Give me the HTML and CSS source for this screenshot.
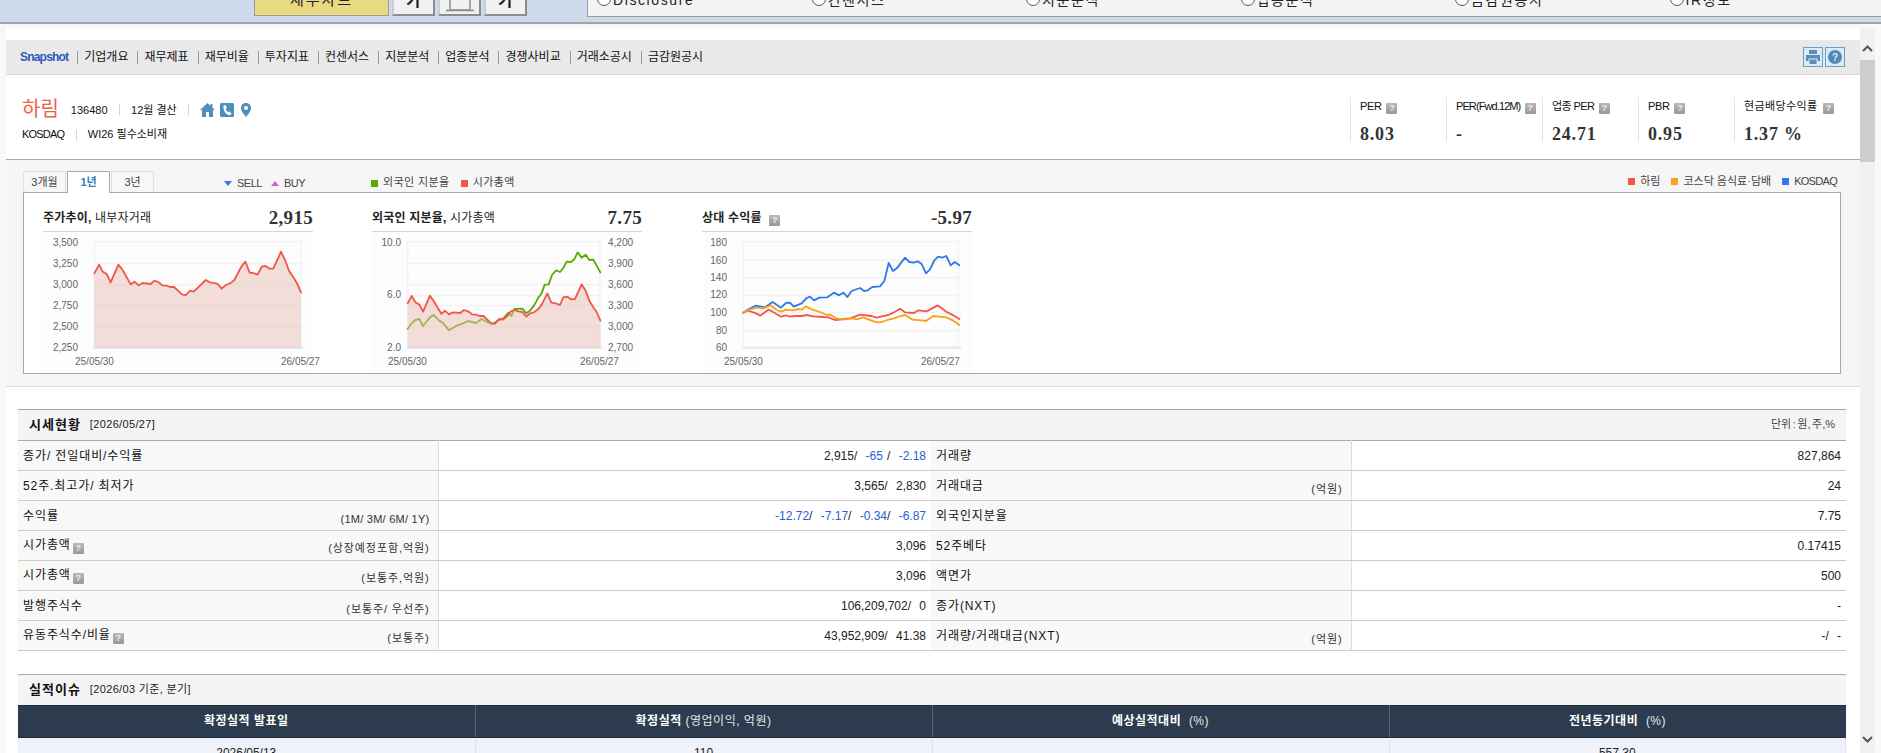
FILE: index.html
```html
<!DOCTYPE html>
<html lang="ko">
<head>
<meta charset="utf-8">
<title>Snapshot</title>
<link rel="stylesheet" href="styles.css">
</head>
<body>
<div class="topband">
  <div class="chartbtn">재무차트</div>
  <div class="fontbtn"><span>가</span></div>
  <div class="fontbtn"><svg width="28" height="26" viewBox="0 0 28 26"><path d="M4 6h20v16H4zM0 22.500h28" fill="none" stroke="#8a8a8a" stroke-width="1.500"/></svg></div>
  <div class="fontbtn"><span>가</span></div>
  <div class="radiopanel">
    <span class="radio">Disclosure</span>
    <span class="radio">컨센서스</span>
    <span class="radio">지분분석</span>
    <span class="radio">업종분석</span>
    <span class="radio">금감원공시</span>
    <span class="radio">IR정보</span>
  </div>
</div>
<div class="page">
  <main class="content">
    <nav class="nav">
      <a class="nav-item first">Snapshot</a>
      <a class="nav-item">기업개요</a>
      <a class="nav-item">재무제표</a>
      <a class="nav-item">재무비율</a>
      <a class="nav-item">투자지표</a>
      <a class="nav-item">컨센서스</a>
      <a class="nav-item">지분분석</a>
      <a class="nav-item">업종분석</a>
      <a class="nav-item">경쟁사비교</a>
      <a class="nav-item">거래소공시</a>
      <a class="nav-item">금감원공시</a>
      <div class="nav-tools">
        <span class="toolbtn"><svg width="14" height="14" viewBox="0 0 14 14"><path fill="#5b8fb9" d="M3 0h8v4H3zM0 5h14v6h-2.500V8.500h-9V11H0zM3.500 9.500h7V14h-7z"/></svg></span>
        <span class="toolbtn"><svg width="14" height="14" viewBox="0 0 14 14"><circle cx="7" cy="7" r="7" fill="#4f8ab5"/><text x="7" y="11" text-anchor="middle" class="helpq">?</text></svg></span>
      </div>
    </nav>

    <section class="company">
      <div class="co-left">
        <div class="co-row1">
          <h1 class="co-name">하림</h1>
          <span class="co-text">136480</span><i class="sep"></i>
          <span class="co-text">12월 결산</span><i class="sep"></i>
          <svg class="co-icons" width="52" height="14" viewBox="0 0 52 14">
            <path fill="#4f8fbd" d="M7.500 0 0 7h2v7h4V9h3v5h4V7h2L12.500 4.700V1h-2v1.800z"/>
            <rect x="20" width="14" height="14" rx="1.500" fill="#4f8fbd"/>
            <path fill="#fff" d="M23.500 2.500l2-.5 1.500 3-1.300 1c.5 1.500 1.300 2.600 2.600 3.300l1.200-1 2 2.400-1.500 1.600c-4.500-.5-7-5-6.500-9.800z"/>
            <path fill="#4f8fbd" fill-rule="evenodd" d="M46 0c3 0 5 2.200 5 5 0 3.500-5 9-5 9s-5-5.500-5-9c0-2.800 2-5 5-5zm0 3a2 2 0 1 0 0 4 2 2 0 0 0 0-4z"/>
          </svg>
        </div>
        <div class="co-row2">
          <span class="co-text co-tight">KOSDAQ</span><i class="sep"></i>
          <span class="co-text">WI26 필수소비재</span>
        </div>
      </div>
      <div class="metrics">
        <div class="metric"><div class="m-label">PER <b class="q">?</b></div><div class="m-val">8.03</div></div>
        <div class="metric"><div class="m-label m-tight">PER(Fwd.12M) <b class="q">?</b></div><div class="m-val">-</div></div>
        <div class="metric"><div class="m-label m-tight2">업종 PER <b class="q">?</b></div><div class="m-val">24.71</div></div>
        <div class="metric"><div class="m-label">PBR <b class="q">?</b></div><div class="m-val">0.95</div></div>
        <div class="metric"><div class="m-label m-wide">현금배당수익률 <b class="q">?</b></div><div class="m-val">1.37 %</div></div>
      </div>
    </section>

    <section class="charts">
      <div class="chart-head">
        <div class="tabs">
          <span class="tab">3개월</span>
          <span class="tab active">1년</span>
          <span class="tab">3년</span>
        </div>
        <div class="trades">
          <span class="lg"><i class="tri down"></i>SELL</span>
          <span class="lg"><i class="tri up"></i>BUY</span>
        </div>
        <div class="legend-a">
          <span class="lg"><i class="sq c-green"></i>외국인 지분율</span>
          <span class="lg"><i class="sq c-red"></i>시가총액</span>
        </div>
        <div class="legend-b">
          <span class="lg"><i class="sq c-red"></i>하림</span>
          <span class="lg"><i class="sq c-orange"></i>코스닥 음식료·담배</span>
          <span class="lg lg-tight"><i class="sq c-blue"></i>KOSDAQ</span>
        </div>
      </div>
      <div class="chart-box">
        <article class="card">
          <header class="card-head"><span class="card-title"><b>주가추이,</b> 내부자거래</span><strong class="card-val">2,915</strong></header>
          <svg class="plot" width="270" height="141" viewBox="0 0 270 141">
            <g transform="scale(.33333) translate(-129 -216)">
              <path class="grid" d="M280 245H908M280 311H908M280 374H908M280 437H908M280 500H908M283 245V563M902 245V563"/>
              <path class="base" d="M280 563H908"/>
              <polygon class="area" points="283,340 297,314 308,335 320,342 332,367 355,314 368,330 392,373 404,365 416,376 428,369 452,372 463,362 475,366 487,376 499,377 510,381 522,381 547,404 558,405 570,392 581,395 617,360 630,367 652,371 665,386 678,375 692,369 703,360 724,320 736,305 749,338 760,339 773,344 785,320 797,318 809,326 820,326 843,275 855,300 867,332 880,352 890,368 903,397 903,563 283,563"/>
              <polyline class="ln red" points="283,340 297,314 308,335 320,342 332,367 355,314 368,330 392,373 404,365 416,376 428,369 452,372 463,362 475,366 487,376 499,377 510,381 522,381 547,404 558,405 570,392 581,395 617,360 630,367 652,371 665,386 678,375 692,369 703,360 724,320 736,305 749,338 760,339 773,344 785,320 797,318 809,326 820,326 843,275 855,300 867,332 880,352 890,368 903,397"/>
            </g>
            <g class="ax ax-end">
              <text x="35" y="14">3,500</text><text x="35" y="35">3,250</text><text x="35" y="56">3,000</text><text x="35" y="77">2,750</text><text x="35" y="98">2,500</text><text x="35" y="119">2,250</text>
            </g>
            <g class="ax"><text x="32" y="133">25/05/30</text><text x="238" y="133">26/05/27</text></g>
          </svg>
        </article>
        <article class="card">
          <header class="card-head"><span class="card-title"><b>외국인 지분율,</b> 시가총액</span><strong class="card-val">7.75</strong></header>
          <svg class="plot" width="270" height="141" viewBox="0 0 270 141">
            <g transform="scale(.33333) translate(-96 -216)">
              <path class="grid" d="M200 245H786M200 311H786M200 374H786M200 407H786M200 437H786M200 500H786M203 245V563M780 245V563"/>
              <path class="base" d="M200 563H786"/>
              <polyline class="ln green" points="203,507 215,490 226,480 238,477 249,498 270,472 281,465 295,480 310,490 327,511 350,497 365,492 384,483 408,489 425,477 445,488 458,492 477,480 490,475 505,458 515,468 523,447 547,446 559,460 570,452 582,437 594,415 605,400 614,374 626,373 636,345 648,331 660,336 670,324 680,305 693,306 703,298 713,277 725,293 737,284 748,300 760,299 781,337"/>
              <polygon class="area" points="203,430 215,408 226,427 238,434 249,455 270,407 281,423 304,461 315,452 327,463 338,457 361,459 372,450 384,454 396,463 408,464 419,468 430,468 454,490 465,491 477,477 488,479 500,470 512,455 523,450 535,454 547,456 559,470 570,460 582,457 594,448 605,434 622,400 634,428 648,430 660,435 670,412 682,410 693,418 705,417 725,373 737,392 748,422 760,442 770,456 781,482 781,563 203,563"/>
              <polyline class="ln red" points="203,430 215,408 226,427 238,434 249,455 270,407 281,423 304,461 315,452 327,463 338,457 361,459 372,450 384,454 396,463 408,464 419,468 430,468 454,490 465,491 477,477 488,479 500,470 512,455 523,450 535,454 547,456 559,470 570,460 582,457 594,448 605,434 622,400 634,428 648,430 660,435 670,412 682,410 693,418 705,417 725,373 737,392 748,422 760,442 770,456 781,482"/>
            </g>
            <g class="ax ax-end"><text x="29" y="14">10.0</text><text x="29" y="66">6.0</text><text x="29" y="119">2.0</text></g>
            <g class="ax">
              <text x="236" y="14">4,200</text><text x="236" y="35">3,900</text><text x="236" y="56">3,600</text><text x="236" y="77">3,300</text><text x="236" y="98">3,000</text><text x="236" y="119">2,700</text>
              <text x="16" y="133">25/05/30</text><text x="208" y="133">26/05/27</text>
            </g>
          </svg>
        </article>
        <article class="card card-last">
          <header class="card-head"><span class="card-title"><b>상대 수익률</b> <b class="q q-title">?</b></span><strong class="card-val">-5.97</strong></header>
          <svg class="plot" width="270" height="141" viewBox="0 0 270 141">
            <g transform="scale(.33333) translate(-66 -216)">
              <path class="grid" d="M187 245H843M187 301H843M187 353H843M187 407H843M187 458H843M187 512H843M190 245V563M835 245V563"/>
              <path class="base" d="M187 563H843"/>
              <polyline class="ln blue" points="190,458 205,448 228,437 255,442 278,426 303,443 318,429 330,428 341,440 365,430 380,414 390,410 402,421 418,413 442,412 462,398 477,406 490,398 502,411 515,393 540,384 552,393 563,391 577,381 600,379 613,363 626,309 639,333 652,323 675,293 688,306 700,308 713,304 725,312 738,340 750,328 762,303 774,290 787,293 799,288 812,316 824,306 838,316"/>
              <polyline class="ln red" points="190,458 205,452 228,460 241,467 265,449 278,455 303,470 318,466 330,470 345,468 365,468 380,465 400,469 430,471 445,472 465,480 480,479 495,477 510,475 540,464 575,468 590,473 605,469 625,465 640,458 660,446 675,457 702,459 715,451 740,454 773,436 800,456 820,466 838,477"/>
              <polyline class="ln orange" points="190,458 210,448 230,443 250,445 272,436 290,450 303,455 318,449 340,451 355,447 365,449 378,439 395,448 420,456 440,465 452,464 470,476 495,478 520,475 530,478 550,472 565,478 590,487 605,486 625,479 640,476 655,470 675,465 698,479 725,481 738,483 760,468 799,472 820,482 838,495"/>
            </g>
            <g class="ax ax-end"><text x="25" y="14">180</text><text x="25" y="32">160</text><text x="25" y="49">140</text><text x="25" y="66">120</text><text x="25" y="84">100</text><text x="25" y="102">80</text><text x="25" y="119">60</text></g>
            <g class="ax"><text x="22" y="133">25/05/30</text><text x="219" y="133">26/05/27</text></g>
          </svg>
        </article>
      </div>
    </section>

    <section class="block">
      <header class="block-head"><h2>시세현황</h2><span class="block-sub">[2026/05/27]</span><span class="unit">단위 : 원, 주,%</span></header>
      <table class="quote">
        <colgroup><col class="c1"><col class="c2"><col class="c3"><col></colgroup>
        <tr><th><span class="th-in">종가/ 전일대비/수익률</span></th><td>2,915/ &nbsp;<span class="blue-t">-65</span> / &nbsp;<span class="blue-t">-2.18</span></td><th><span class="th-in">거래량</span></th><td>827,864</td></tr>
        <tr><th><span class="th-in">52주.최고가/ 최저가</span></th><td>3,565/ &nbsp;2,830</td><th><span class="th-in">거래대금<em>(억원)</em></span></th><td>24</td></tr>
        <tr><th><span class="th-in">수익률<em class="em-latin">(1M/ 3M/ 6M/ 1Y)</em></span></th><td><span class="blue-t">-12.72</span>/ &nbsp;<span class="blue-t">-7.17</span>/ &nbsp;<span class="blue-t">-0.34</span>/ &nbsp;<span class="blue-t">-6.87</span></td><th><span class="th-in">외국인지분율</span></th><td>7.75</td></tr>
        <tr><th><span class="th-in"><span>시가총액<b class="q q-th">?</b></span><em>(상장예정포함,억원)</em></span></th><td>3,096</td><th><span class="th-in">52주베타</span></th><td>0.17415</td></tr>
        <tr><th><span class="th-in"><span>시가총액<b class="q q-th">?</b></span><em>(보통주,억원)</em></span></th><td>3,096</td><th><span class="th-in">액면가</span></th><td>500</td></tr>
        <tr><th><span class="th-in">발행주식수<em>(보통주/ 우선주)</em></span></th><td>106,209,702/ &nbsp;0</td><th><span class="th-in">종가(NXT)</span></th><td>-</td></tr>
        <tr><th><span class="th-in"><span>유동주식수/비율<b class="q q-th">?</b></span><em>(보통주)</em></span></th><td>43,952,909/ &nbsp;41.38</td><th><span class="th-in">거래량/거래대금(NXT)<em>(억원)</em></span></th><td>-/ &nbsp;-</td></tr>
      </table>
    </section>

    <section class="block block-2">
      <header class="block-head"><h2>실적이슈</h2><span class="block-sub">[2026/03 기준, 분기]</span></header>
      <table class="issue">
        <colgroup><col class="i1"><col class="i2"><col class="i3"><col></colgroup>
        <tr><th>확정실적 발표일</th><th>확정실적 <span class="thin">(영업이익, 억원)</span></th><th>예상실적대비 &nbsp;<span class="thin">(%)</span></th><th>전년동기대비 &nbsp;<span class="thin">(%)</span></th></tr>
        <tr><td>2026/05/13</td><td>110</td><td></td><td>557.30</td></tr>
      </table>
    </section>
  </main>
  <aside class="scroll">
    <div class="sb-btn"><svg width="11" height="7" viewBox="0 0 11 7"><path d="M1 6l4.500-4.500L10 6" fill="none" stroke="#555" stroke-width="2"/></svg></div>
    <div class="sb-thumb"></div>
    <div class="sb-rest"><svg width="11" height="7" viewBox="0 0 11 7"><path d="M1 1l4.500 4.500L10 1" fill="none" stroke="#555" stroke-width="2"/></svg></div>
  </aside>
</div>
</body>
</html>
```
FILE: styles.css
```css
* { box-sizing: border-box; }
html, body { margin: 0; padding: 0; height: 753px; overflow: hidden; }
body { background: #f8f8f8; color: #111; font: 12px/1.2 "Liberation Sans", "Noto Sans CJK KR", sans-serif; }

/* top band */
.topband { height: 24px; background: #ccdaeb; border-bottom: 2px solid #a3a3a3; display: flex; align-items: flex-end; overflow: hidden; padding: 0 6px 6px 254px; }
.chartbtn { width: 135px; height: 30px; flex: none; background: #e9d981; border: 1px solid #9a9a9a; font-size: 15px; line-height: 26px; text-align: center; color: #222; letter-spacing: 2px; }
.fontbtn { width: 43px; height: 30px; flex: none; margin-left: 3px; background: #f1f1f1; border: 2px solid #8c8c8c; border-top-color: #ddd; border-left-color: #ccc; font-size: 16px; font-weight: bold; line-height: 28px; text-align: center; color: #222; display: flex; align-items: center; justify-content: center; }
.radiopanel { flex: 1; margin-left: 60px; height: 34px; margin-bottom: -1px; background: #f4f4f4; border: 1px solid #9b9b9b; display: flex; padding-left: 9px; font-size: 14px; line-height: 30px; color: #222; letter-spacing: 1.600px; }
.radio { width: 214.500px; display: flex; align-items: center; gap: 2px; }
.radio::before { content: ""; width: 12px; height: 12px; border: 1px solid #555; border-radius: 50%; background: #fff; margin-top: -2px; }

.page { display: flex; height: 729px; }
.content { flex: 1; min-width: 0; margin: 4px 0 0 6px; padding-top: 12px; background: #fff; }
.scroll { width: 15px; margin: 4px 6px 0 0; background: #f1f1f1; display: flex; flex-direction: column; }
.sb-btn { height: 32px; display: flex; align-items: center; justify-content: center; padding-top: 8px; }
.sb-thumb { height: 102px; background: #cdcdcd; }
.sb-rest { flex: 1; display: flex; align-items: flex-end; justify-content: center; padding-bottom: 10px; }

/* nav */
.nav { height: 35px; background: #e9e9e9; border-bottom: 1px solid #d8d8d8; display: flex; align-items: center; padding-left: 14px; padding-right: 15px; }
.nav-item { padding: 0 9px 0 6px; border-left: 1px solid #999; line-height: 13px; color: #111; white-space: nowrap; }
.nav-item.first { border-left: 0; padding: 0 9px 0 0; color: #2d5cb8; font-weight: bold; letter-spacing: -.8px; }
.nav-tools { margin-left: auto; display: flex; gap: 2px; }
.toolbtn { width: 20px; height: 20px; background: #dcebf6; border: 1px solid #62a3cc; display: flex; align-items: center; justify-content: center; }
.helpq { fill: #dcebf6; font: bold 10px "Liberation Sans", sans-serif; }

/* company */
.company { height: 85px; border-bottom: 1px solid #aaa; display: flex; justify-content: space-between; padding-left: 16px; }
.co-left { padding-top: 22px; }
.co-row1 { display: flex; align-items: center; height: 24px; }
.co-row1 .co-text { margin-top: 3px; }
.co-name { margin: 0 12px 0 0; font-size: 20px; font-weight: normal; color: #ee6144; line-height: 24px; }
.co-row2 { display: flex; align-items: center; margin-top: 7px; height: 14px; }
.co-text { font-size: 11px; color: #111; }
.co-tight { letter-spacing: -.8px; }
.sep { width: 1px; height: 11px; background: #d4d4d4; margin: 0 11px 0 11.500px; }
.co-icons { margin-top: 1px; }
.metrics { display: flex; padding-right: 30px; margin-top: 22px; height: 45px; }
.metric { width: 96px; border-left: 1px solid #e6e6e6; padding-left: 9px; }
.m-label { font-size: 11px; line-height: 13px; margin-top: 3px; white-space: nowrap; letter-spacing: -.3px; color: #111; }
.m-label .q { margin-left: 2px; }
.m-tight { letter-spacing: -.9px; }
.m-tight2 { letter-spacing: -.6px; }
.m-wide { letter-spacing: .4px; }
.m-val { font: bold 18px/20px "Liberation Serif", serif; color: #333; margin-top: 10px; letter-spacing: .8px; }
.q { display: inline-block; width: 11px; height: 11px; background: linear-gradient(#b8b8b8, #999); border-radius: 1px; color: #eee; font: bold 9px/11px "Liberation Sans", sans-serif; text-align: center; vertical-align: -1px; letter-spacing: 0; }
.q-title { margin-left: 4px; }
.th-in .q-th { margin-left: 2px; vertical-align: -2px; }

/* charts */
.charts { height: 227px; background: #f6f6f6; border-bottom: 1px solid #dcdcdc; padding: 0 19px 0 17px; }
.chart-head { height: 32px; display: flex; align-items: flex-end; font-size: 11px; color: #444; }
.tabs { display: flex; gap: 1px; }
.tab { width: 43px; height: 21px; background: #f7f7f7; border: 1px solid #dfdfdf; border-bottom: 0; text-align: center; line-height: 20px; color: #444; }
.tab.active { height: 22px; margin-bottom: -1px; background: #fff; border: 1px solid #aaa; border-bottom: 0; color: #3a7ab8; font-weight: bold; position: relative; }
.trades { display: flex; gap: 9px; margin-left: 70px; height: 21px; align-items: center; padding-top: 4px; letter-spacing: -.5px; }
.legend-a { display: flex; gap: 11px; margin-left: 66px; height: 21px; align-items: center; padding-top: 3px; letter-spacing: .4px; }
.legend-b { display: flex; gap: 11px; margin-left: auto; height: 21px; align-items: center; padding-right: 4px; }
.lg { display: flex; align-items: center; white-space: nowrap; }
.lg-tight { letter-spacing: -.7px; }
.tri { width: 0; height: 0; margin-right: 5px; border-left: 4.500px solid transparent; border-right: 4.500px solid transparent; }
.tri.down { border-top: 5px solid #2f7ae5; }
.tri.up { border-bottom: 5px solid #d65fc4; }
.sq { width: 7px; height: 7px; margin-right: 5px; }
.c-green { background: #5aab00; }
.c-red { background: #f2584a; }
.c-orange { background: #f9a11b; }
.c-blue { background: #2f7ae5; }
.chart-box { height: 182px; background: #fff; border: 1px solid #aaa; padding: 14px 0 0 19px; display: flex; gap: 59px; }
.card { width: 270px; }
.card-last { margin-left: 1px; }
.card-head { height: 25px; border-bottom: 1px solid #d5d5d5; display: flex; justify-content: space-between; align-items: center; padding-bottom: 2px; }
.card-title { font-size: 12px; color: #222; letter-spacing: .2px; }
.card-val { font: bold 19px/20px "Liberation Serif", serif; color: #333; letter-spacing: .3px; }
.plot { display: block; background: #fdfdfd; overflow: visible; }
.grid { stroke: #f3f3f3; stroke-width: 5; fill: none; }
.base { stroke: #e1e7f2; stroke-width: 6; fill: none; }
.area { fill: #e9beb3; fill-opacity: .5; stroke: none; }
.ln { fill: none; stroke-width: 5.500; stroke-linejoin: round; stroke-linecap: round; }
.red { stroke: #f2584a; }
.green { stroke: #5aab00; }
.blue { stroke: #2f7ae5; }
.orange { stroke: #f9a11b; }
.ax { font: 10px "Liberation Sans", sans-serif; fill: #666; }
.ax-end { text-anchor: end; }

/* tables */
.block { margin: 22px 14px 0 12px; }
.block-2 { margin-top: 23px; }
.block-head { height: 31px; background: #f4f4f4; border-top: 1px solid #aaa; display: flex; align-items: center; padding: 0 11px; }
.block-head h2 { margin: 0 9px 0 0; font-size: 13px; font-weight: bold; letter-spacing: 1px; color: #111; }
.block-sub { font-size: 11px; color: #222; letter-spacing: .35px; }
.unit { margin-left: auto; font-size: 11px; color: #444; word-spacing: -1.500px; }
table { width: 100%; border-collapse: collapse; table-layout: fixed; }
.quote { border-top: 1px solid #aaa; }
.c1 { width: 420px; }
.c2 { width: 493px; }
.c3 { width: 420px; }
.quote tr { height: 30px; }
.quote th, .quote td { padding: 0 5px; border-bottom: 1px solid #ccc; }
.quote th { background: #f8f8f8; border-right: 1px solid #ddd; font-weight: normal; text-align: left; color: #111; }
.quote td { text-align: right; padding-top: 2px; color: #222; word-spacing: .8px; }
.th-in { display: flex; justify-content: space-between; line-height: 14px; letter-spacing: .9px; }
.th-in em { font-style: normal; font-size: 11px; color: #333; padding-right: 3px; margin-top: 3px; margin-bottom: -3px; }
.th-in .em-latin { letter-spacing: .25px; }
.blue-t { color: #2463d6; }
.i1 { width: 457px; }
.i2 { width: 457px; }
.i3 { width: 457px; }
.issue th { height: 32px; background: #2c3c4e; border-top: 1px solid #1f2c3a; border-bottom: 1px solid #1f2c3a; border-right: 1px solid #566575; color: #fff; font-size: 12px; font-weight: bold; text-align: center; letter-spacing: .5px; }
.issue th:last-child { border-right: 0; }
.thin { font-weight: normal; color: #e6e6e6; }
.issue td { height: 30px; background: #eff3f9; border-right: 1px solid #dfe3ea; text-align: center; color: #222; }
```
